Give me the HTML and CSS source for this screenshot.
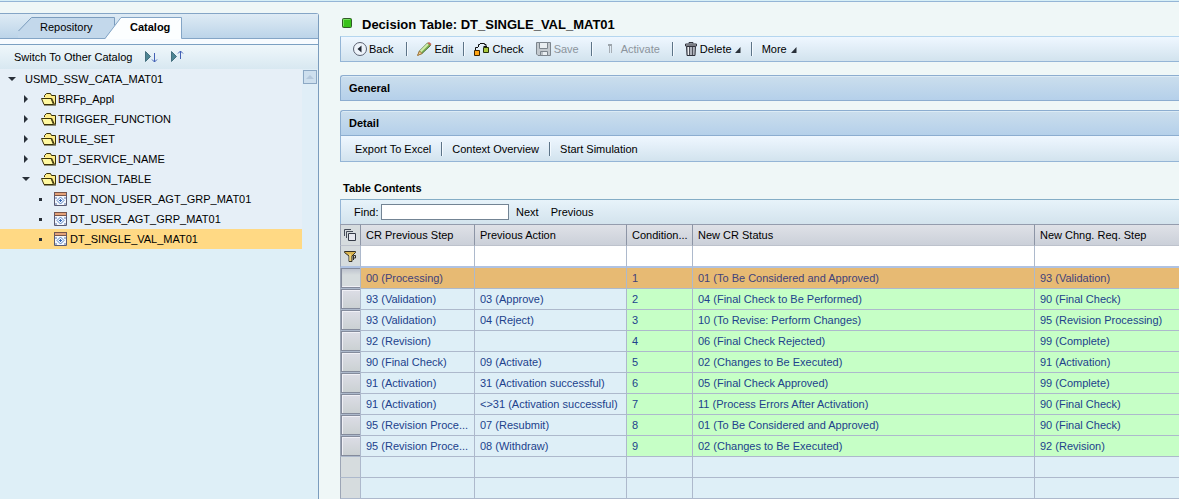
FILE: index.html
```html
<!DOCTYPE html>
<html lang="en">
<head>
<meta charset="utf-8">
<title>Decision Table: DT_SINGLE_VAL_MAT01</title>
<link rel="stylesheet" href="styles.css">
</head>
<body>
<svg class="defs" aria-hidden="true">
  <symbol id="folder" viewBox="0 0 16 14">
    <path d="M3.500 5.500v-2l2-2h4l1 2h3.500v9H3.500z" fill="#ffee8a"/>
    <path d="M3.500 5V3.500l2-2h4l1 2H14.500v9" fill="none" stroke="#3b3208"/>
    <path d="M1 6.500h9.500l2 6H3z" fill="#fff9a0"/>
    <path d="M12.500 12.500H3L.5 6.500h9.500z" fill="none" stroke="#3b3208"/>
    <path d="M10.500 6l3 6.500" stroke="#3b3208"/>
    <path d="M3 13h12" stroke="#3b3208"/>
  </symbol>
  <symbol id="grid" viewBox="0 0 13 14">
    <path d="M.5.500h12v13H.5z" fill="#f4f8fd" stroke="#5a5a72"/>
    <path d="M1 1h11v2H1z" fill="#e3a27a"/>
    <path d="M0 3.500h13M0 .500h13" stroke="#7b5548"/>
    <path d="M1 6h2M10 6h2M1 12h2M10 12h2" stroke="#a5b4d2" stroke-width="2"/>
    <path d="M6.500 5l3.500 3.500L6.500 12 3 8.500z" fill="#f4faff" stroke="#5a83c4"/>
    <path d="M5 8.500h3M6.500 7v3" stroke="#3766b4"/>
  </symbol>
  <symbol id="right" viewBox="0 0 8 8"><path d="M2 0l4 4-4 4z" fill="#293039"/></symbol>
  <symbol id="down" viewBox="0 0 8 8"><path d="M0 2h8L4 6z" fill="#293039"/></symbol>
  <symbol id="dot" viewBox="0 0 8 8"><path d="M2 3h3v3H2z" fill="#293039"/></symbol>
  <symbol id="corner" viewBox="0 0 6 6"><path d="M5.500 0v6H0z" fill="#293039"/></symbol>
</svg>
<div class="app">
  <aside class="side">
    <nav class="tabs">
      <svg class="tabshape" width="182" height="25" viewBox="0 0 182 25" aria-hidden="true">
        <path d="M18 17.500L31.500 3.500h83V24H18z" fill="#c3d8eb"/>
        <path d="M18.500 17L31.500 3.500h83v8" fill="none" stroke="#7b9cbd"/>
        <path d="M105 25l16-21.500h60.500V25z" fill="#fcfeff"/>
        <path d="M105 24.500l16-21h60.500v21" fill="none" stroke="#84a5c6"/>
      </svg>
      <button class="tab repo">Repository</button>
      <button class="tab cat">Catalog</button>
    </nav>
    <div class="strip"></div>
    <div class="switchbar">
      <button>Switch To Other Catalog</button>
      <button class="expand" aria-label="Expand"><svg width="14" height="14"><path d="M1.500 1.500l5 5-5 5z" fill="#4d8593" stroke="#45707f"/><path d="M10.500 3v9M8 9.500l2.500 2.500 2.500-2.500" fill="none" stroke="#4260b5"/></svg></button>
      <button class="expand" aria-label="Collapse"><svg width="14" height="14"><path d="M1.500 1.500l5 5-5 5z" fill="#4d8593" stroke="#45707f"/><path d="M10.500 9V1M8 3.500L10.500 1 13 3.500" fill="none" stroke="#4260b5"/></svg></button>
    </div>
    <div class="treebox">
      <ul class="tree">
        <li class="l0"><svg class="mark"><use href="#down"/></svg><span>USMD_SSW_CATA_MAT01</span></li>
        <li class="l1"><svg class="mark"><use href="#right"/></svg><svg class="folder"><use href="#folder"/></svg><span>BRFp_Appl</span></li>
        <li class="l1"><svg class="mark"><use href="#right"/></svg><svg class="folder"><use href="#folder"/></svg><span>TRIGGER_FUNCTION</span></li>
        <li class="l1"><svg class="mark"><use href="#right"/></svg><svg class="folder"><use href="#folder"/></svg><span>RULE_SET</span></li>
        <li class="l1"><svg class="mark"><use href="#right"/></svg><svg class="folder"><use href="#folder"/></svg><span>DT_SERVICE_NAME</span></li>
        <li class="l1"><svg class="mark"><use href="#down"/></svg><svg class="folder"><use href="#folder"/></svg><span>DECISION_TABLE</span></li>
        <li class="l2"><svg class="mark"><use href="#dot"/></svg><svg class="grid"><use href="#grid"/></svg><span>DT_NON_USER_AGT_GRP_MAT01</span></li>
        <li class="l2"><svg class="mark"><use href="#dot"/></svg><svg class="grid"><use href="#grid"/></svg><span>DT_USER_AGT_GRP_MAT01</span></li>
        <li class="l2 selected"><svg class="mark"><use href="#dot"/></svg><svg class="grid"><use href="#grid"/></svg><span>DT_SINGLE_VAL_MAT01</span></li>
      </ul>
      <div class="scroll"><button aria-label="Scroll up"><svg width="8" height="4"><path d="M0 4l4-4 4 4z" fill="#b4c8dc"/></svg></button></div>
    </div>
  </aside>
  <main class="main">
    <header class="title">
      <svg width="10" height="10" aria-hidden="true"><rect x=".5" y=".5" width="9" height="9" rx="1" fill="#38c21a" stroke="#315a29"/><path d="M1.500 8V1.500H8" fill="none" stroke="#77df5e"/></svg>
      <h1>Decision Table: DT_SINGLE_VAL_MAT01</h1>
    </header>
    <div class="bar actions">
      <button class="back"><svg width="14" height="14"><circle cx="7" cy="7" r="6.500" fill="#edf3fa" stroke="#5a6070"/><path d="M8.500 3.500v7L4.500 7z" fill="#202632"/></svg>Back</button>
      <i class="sep"></i>
      <button class="edit"><svg width="15" height="14"><path d="M1 13l1.500-4L10.500 1l3 2.500-8.500 8z" fill="#7db453" stroke="#4d6d38"/><path d="M3.500 9.500l7.500-7.500" stroke="#d3ecaa" stroke-width="2"/><path d="M.5 13.500L2.500 9l2.500 2.500z" fill="#f3d092" stroke="#a5793f"/><path d="M10.500 1l3 2.500 1-1.500L12 0z" fill="#c66852"/></svg>Edit</button>
      <i class="sep"></i>
      <button class="check"><svg width="16" height="14"><path d="M1.500 8V5.500H4M4.500 5V2.500H6M6 1.500h4.500v1h1.500v2M9.500 4.500H13" fill="none" stroke="#111"/><path d="M.5 8.500h5v5h-5z" fill="#ffa514" stroke="#3b2400"/><path d="M9.500 5.500h5v5h-5z" fill="#a9c83d" stroke="#243009"/></svg>Check</button>
      <button class="save" disabled><svg width="15" height="14"><path d="M.5.500h14v13H2l-1.500-1.500z" fill="#c3c9ce" stroke="#7c858d"/><path d="M3.500.500h8v6h-8zM4.500 9.500h7v4h-7z" fill="#e9eef1" stroke="#7c858d"/><path d="M6 10v3" stroke="#8b949b"/></svg>Save</button>
      <i class="sep"></i>
      <button class="activate" disabled><svg width="4" height="10"><path d="M0 0h4v2H0z" fill="#9da5ac"/><path d="M1.500 2v7M3.500 2v7" stroke="#a6adb4"/></svg>Activate</button>
      <i class="sep"></i>
      <button class="delete"><svg width="12" height="14"><path d="M1.500 4.500h9L10 13.500H2z" fill="#aeb2bb" stroke="#30333c"/><path d="M4.500 5v8M7.500 5v8" stroke="#4d505a"/><path d="M3.500 5v8" stroke="#eee"/><path d="M4 1.500V.500h4v1" fill="none" stroke="#30333c"/><path d="M.5 2h11v2H.5z" fill="#c3c6cc" stroke="#30333c"/></svg>Delete<svg class="corner"><use href="#corner"/></svg></button>
      <i class="sep"></i>
      <button class="more">More<svg class="corner"><use href="#corner"/></svg></button>
    </div>
    <h2 class="panel general">General</h2>
    <h2 class="panel detail">Detail</h2>
    <div class="bar sub">
      <button>Export To Excel</button><i class="sep"></i>
      <button>Context Overview</button><i class="sep"></i>
      <button>Start Simulation</button>
    </div>
    <h3 class="caption">Table Contents</h3>
    <div class="find">
      <label for="find">Find:</label><input id="find" type="text">
      <button>Next</button><button>Previous</button>
    </div>
    <table class="data">
      <colgroup><col class="c0"><col class="c1"><col class="c2"><col class="c3"><col class="c4"><col></colgroup>
      <thead>
        <tr><th><button class="ico" aria-label="Select all"><svg width="13" height="13"><path d="M.5 7V.500H7M2.500 9V2.500H9" fill="none" stroke="#444b57"/><path d="M4.500 4.500h7v7h-7z" fill="#e5e8ee" stroke="#343b47"/></svg></button></th><th>CR Previous Step</th><th>Previous Action</th><th>Condition...</th><th>New CR Status</th><th>New Chng. Req. Step</th></tr>
        <tr class="filter"><td><button class="ico" aria-label="Filter"><svg width="13" height="13"><path d="M.5 1.500h11v1L8 6v5.500H5V6L.5 2.500z" fill="#d9b551" stroke="#343026"/><path d="M6 4v7" stroke="#fff0ae"/><path d="M9.500 10V5.500h2v2.500h-2" fill="none" stroke="#343026"/></svg></button></td><td></td><td></td><td></td><td></td><td></td></tr>
      </thead>
      <tbody>
        <tr class="on"><td><button class="row" aria-label="Row 1"></button></td><td>00 (Processing)</td><td></td><td>1</td><td>01 (To Be Considered and Approved)</td><td>93 (Validation)</td></tr>
        <tr><td><button class="row" aria-label="Row 2"></button></td><td>93 (Validation)</td><td>03 (Approve)</td><td>2</td><td>04 (Final Check to Be Performed)</td><td>90 (Final Check)</td></tr>
        <tr><td><button class="row" aria-label="Row 3"></button></td><td>93 (Validation)</td><td>04 (Reject)</td><td>3</td><td>10 (To Revise: Perform Changes)</td><td>95 (Revision Processing)</td></tr>
        <tr><td><button class="row" aria-label="Row 4"></button></td><td>92 (Revision)</td><td></td><td>4</td><td>06 (Final Check Rejected)</td><td>99 (Complete)</td></tr>
        <tr><td><button class="row" aria-label="Row 5"></button></td><td>90 (Final Check)</td><td>09 (Activate)</td><td>5</td><td>02 (Changes to Be Executed)</td><td>91 (Activation)</td></tr>
        <tr><td><button class="row" aria-label="Row 6"></button></td><td>91 (Activation)</td><td>31 (Activation successful)</td><td>6</td><td>05 (Final Check Approved)</td><td>99 (Complete)</td></tr>
        <tr><td><button class="row" aria-label="Row 7"></button></td><td>91 (Activation)</td><td>&lt;&gt;31 (Activation successful)</td><td>7</td><td>11 (Process Errors After Activation)</td><td>90 (Final Check)</td></tr>
        <tr><td><button class="row" aria-label="Row 8"></button></td><td>95 (Revision Proce...</td><td>07 (Resubmit)</td><td>8</td><td>01 (To Be Considered and Approved)</td><td>90 (Final Check)</td></tr>
        <tr><td><button class="row" aria-label="Row 9"></button></td><td>95 (Revision Proce...</td><td>08 (Withdraw)</td><td>9</td><td>02 (Changes to Be Executed)</td><td>92 (Revision)</td></tr>
        <tr class="blank"><td></td><td></td><td></td><td></td><td></td><td></td></tr>
        <tr class="blank"><td></td><td></td><td></td><td></td><td></td><td></td></tr>
      </tbody>
    </table>
  </main>
</div>
</body>
</html>
```
FILE: styles.css
```css
* { box-sizing: border-box; }
body {
  margin: 0;
  background: #eff7f7;
  color: #000;
  font: 11px/14px "Liberation Sans", Arial, sans-serif;
}
button {
  display: flex;
  align-items: center;
  margin: 0;
  padding: 0;
  border: 0;
  background: none;
  color: inherit;
  font: inherit;
  white-space: nowrap;
}
h1, h2, h3 { margin: 0; }
svg { flex: none; display: block; }
.defs { position: absolute; width: 0; height: 0; }
.app {
  display: flex;
  gap: 21px;
  min-height: 100vh;
  border-top: 1px solid #d6eff7;
  box-shadow: inset 0 1px #94b5d6;
}

.side {
  display: flex;
  flex-direction: column;
  flex: 0 0 319px;
  margin-top: 12px;
  border-top: 1px solid #84a5c6;
  border-right: 1px solid #7b9cbd;
  border-top-right-radius: 3px;
  background: #deeff7;
}
.tabs {
  position: relative;
  display: flex;
  height: 25px;
  align-items: center;
  padding: 2px 0 0 40px;
  border-bottom: 1px solid #84a5c6;
  background: linear-gradient(#deebf5, #bcd4e9);
}
.tabshape { position: absolute; left: 0; top: 0; }
.tab { position: relative; }
.repo { width: 90px; }
.cat { font-weight: bold; }
.strip { height: 6px; background: #f7fbff; border-bottom: 1px solid #7ba0c2; }
.switchbar {
  display: flex;
  align-items: center;
  height: 24px;
  padding-left: 14px;
  background: linear-gradient(#eff7fb, #d8e8f1);
}
.expand { margin-left: 12px; }
.treebox { display: flex; align-items: stretch; background: linear-gradient(90deg, #e6eff7 302px, #e0eef7 302px); }
.tree { flex: 1; margin: 0; padding: 0; list-style: none; }
.tree li { display: flex; align-items: center; height: 20px; }
.l0 { padding-left: 8px; }
.l0 .mark { margin-right: 9px; }
.l1 { padding-left: 22px; }
.l1 .mark { margin-right: 11px; }
.l2 { padding-left: 37px; }
.l2 .mark { margin-right: 9px; }
.mark { width: 8px; height: 8px; }
.folder { width: 16px; height: 14px; margin-right: 1px; }
.grid { width: 13px; height: 14px; margin-right: 3px; }
.selected { background: #ffd984; }
.scroll { width: 16px; padding-top: 1px; }
.scroll button {
  justify-content: center;
  width: 14px;
  height: 14px;
  margin-left: 1px;
  border: 1px solid #8ca8c4;
  background: #cddfee;
}

.main { flex: 1; min-width: 0; padding-top: 13px; }
.title { display: flex; align-items: center; gap: 10px; height: 22px; padding-left: 2px; }
.title svg { margin-bottom: 4px; }
h1 { font-size: 13px; line-height: 16px; }
.bar {
  display: flex;
  align-items: center;
  height: 26px;
  border: 1px solid #94b5d6;
  border-right: 0;
  background: linear-gradient(#eff7ff, #d2e3ee);
}
.actions { border-top-color: #b5d6ef; padding-left: 12px; }
.actions button { gap: 2px; }
.sep { width: 1px; height: 14px; background: #5c7387; box-shadow: 1px 0 #f4faff; }
.back { margin-right: 13px; }
.edit { margin: 0 10px; }
.check { margin: 0 12px 0 10px; }
.save { margin-right: 12px; }
.save:disabled, .activate:disabled { color: #8c949c; }
.actions .save, .actions .delete { gap: 3px; }
.actions .activate { gap: 9px; margin: 0 12px 0 16px; }
.delete { margin: 0 10px 0 12px; }
.more { margin-left: 10px; }
.corner { width: 6px; height: 6px; margin-top: 2px; }
.more .corner { margin-left: 2px; }
.panel {
  height: 26px;
  padding-left: 8px;
  border: 1px solid #8cadd0;
  border-right: 0;
  border-top-left-radius: 3px;
  background: linear-gradient(#cbdeed, #b5d0ea);
  box-shadow: inset 0 1px #dcebf5;
  font-size: 11px;
  line-height: 24px;
}
.general { margin-top: 13px; }
.detail { margin-top: 9px; }
.sub { border-top: 0; padding-left: 14px; }
.sub .sep { margin: 0 10px; }
.caption { margin: 18px 0 3px 3px; font-size: 11px; line-height: 16px; }
.find {
  display: flex;
  align-items: center;
  height: 25px;
  padding-left: 13px;
  border-top: 1px solid #84adc6;
  border-left: 1px solid #94b5d6;
  background: linear-gradient(#e7f3fa, #d3e3ed);
}
.find label { width: 27px; }
.find input {
  width: 128px;
  height: 16px;
  margin-right: 7px;
  padding: 0 2px;
  border: 1px solid #738494;
  background: #fff;
  font: inherit;
}
.find button { margin-right: 12px; }

.data { width: 100%; table-layout: fixed; border-collapse: separate; border-spacing: 0; }
.c0 { width: 21px; }
.c1 { width: 114px; }
.c2 { width: 152px; }
.c3 { width: 66px; }
.c4 { width: 342px; }
.data th, .data td {
  height: 21px;
  padding: 0 0 0 5px;
  border-right: 1px solid #adb9cc;
  border-bottom: 1px solid #adb9cc;
  text-align: left;
  font-weight: normal;
  line-height: 14px;
  white-space: nowrap;
  overflow: hidden;
}
.data th {
  height: 22px;
  border-top: 1px solid #949cad;
  border-right-color: #8c94a5;
  border-bottom-color: #bdc2cc;
  background: linear-gradient(#dfe1e7, #cbd0d9);
}
.data .filter td { height: 22px; background: #fff; border-bottom: 2px solid #afc2e2; }
.data td:last-child, .data th:last-child { border-right: 0; }
.data td:first-child, .data th:first-child {
  padding: 0;
  border-left: 1px solid #9ca5b5;
  background: #d6dcde;
}
.data .filter td:first-child { background: #d6dcde; }
.data tbody td { background: #deeff7; color: #21428c; }
.data tbody td:nth-child(n+4) { background: #c6ffc6; }
.data tbody .on td:nth-child(n+2) { background: #e7ba73; color: #42427b; }
.data tbody .blank td:nth-child(n+2) { background: #deeff7; }
.data tbody .blank td:first-child { background: #d6dcde; }
.ico { width: 100%; justify-content: center; }
.row {
  width: 19px;
  height: 20px;
  border: 1px solid #848b9c;
  border-right: 0;
  background: linear-gradient(#dcdde6, #cbd1d3);
  box-shadow: inset 1px 1px #f0f0f6;
}
.on .row { background: linear-gradient(#bfc4cf, #d6dcde 6px); box-shadow: inset 0 -1px #f0f0f6; }
```
